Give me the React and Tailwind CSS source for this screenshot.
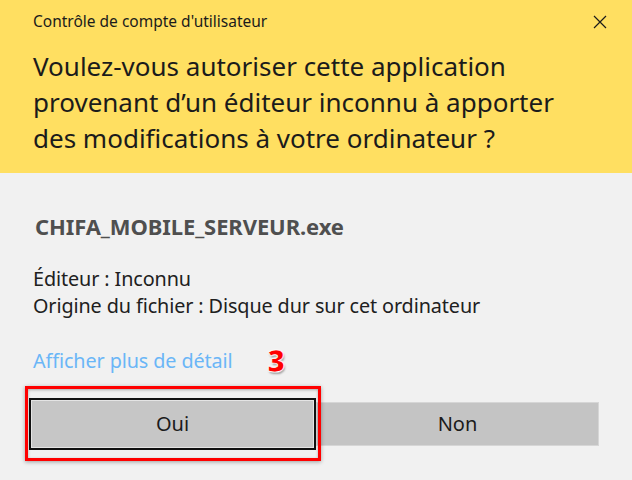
export default function App() {
  return (
    <div className="w-[632px] h-[480px] overflow-hidden bg-[#f1f1f1] font-['Noto_Sans',sans-serif] text-[#1b1b1b]">
      {/* header jaune */}
      <div className="h-[173px] bg-[#ffdf61] px-[33px] pt-[11px]">
        <div className="flex items-center justify-between">
          <span className="text-[15.5px] leading-[20px]">Contrôle de compte d'utilisateur</span>
          <svg width="14" height="14" viewBox="0 0 14 14" className="mr-[-8px] mt-[2px]">
            <path d="M1 1 L13 13 M13 1 L1 13" stroke="#1b1b1b" strokeWidth="1.2" fill="none" />
          </svg>
        </div>
        <h1 className="mt-[17px] text-[26px] leading-[36px] font-normal">
          Voulez-vous autoriser cette application
          <br />
          provenant d’un éditeur inconnu à apporter
          <br />
          des modifications à votre ordinateur ?
        </h1>
      </div>

      <div className="pt-[39px]">
        <div className="px-[35px] text-[22px] leading-[28px] font-bold text-[#4f4f4f] tracking-[-0.1px]">
          CHIFA_MOBILE_SERVEUR.exe
        </div>

        <div className="mt-[25px] px-[33px] text-[19.8px] leading-[27px] text-[#202020] tracking-[-0.1px]">
          <div>Éditeur : Inconnu</div>
          <div>Origine du fichier : Disque dur sur cet ordinateur</div>
        </div>

        <div className="mt-[30px] flex items-center px-[33px] h-[24px]">
          <span className="text-[19.8px] leading-[24px] text-[#6ab6f7] tracking-[-0.1px]">Afficher plus de détail</span>
          <span className="ml-[35px] text-[30px] font-black leading-[24px] text-[#ff0000] [-webkit-text-stroke:0.7px_#ffffff] [text-shadow:0_0_1px_#fff,0_0_2px_#fff,1px_2px_2px_#9a9a9a]">
            3
          </span>
        </div>

        <div className="mt-[25px] flex items-center pl-[29px]">
          <div className="relative">
            <button className="w-[287px] h-[52px] border-2 border-[#111111] bg-[#c6c6c6] text-[20px] text-[#1b1b1b] shadow-[inset_0_0_0_1px_#e4e4e4]">
              Oui
            </button>
            <div className="absolute left-[-4px] right-[-5px] top-[-12px] bottom-[-11px] border-[3px] border-[#ff0000] shadow-[0_1px_4px_rgba(0,0,0,0.35),inset_0_1px_3px_rgba(0,0,0,0.3)]" />
          </div>
          <button className="w-[283px] h-[44px] bg-[#c4c4c4] border border-[#d6d6d6] text-[20px] text-[#1b1b1b]">
            Non
          </button>
        </div>
      </div>
    </div>
  );
}
